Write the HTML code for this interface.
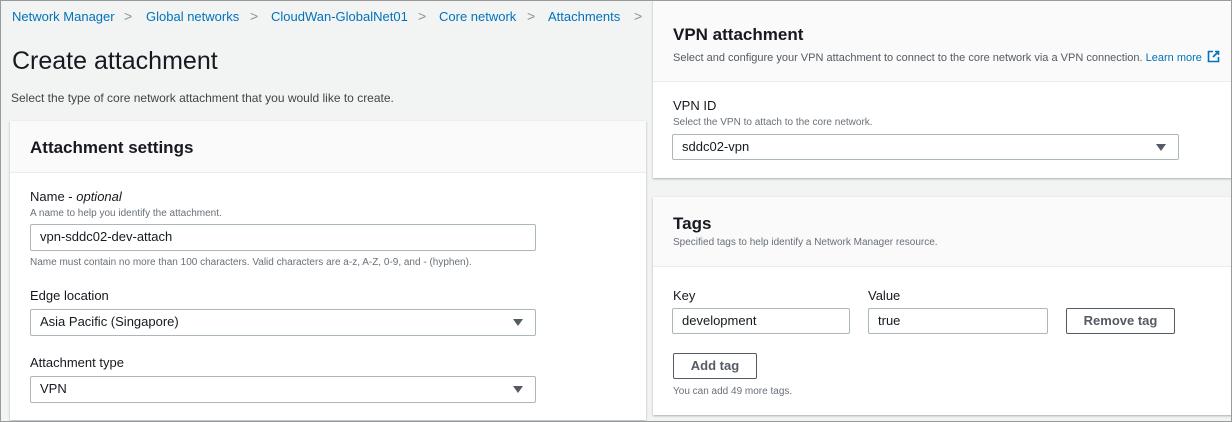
<!DOCTYPE html>
<html><head><meta charset="utf-8"><style>
*{box-sizing:border-box;margin:0;padding:0}
html,body{width:1232px;height:422px;overflow:hidden}
body{background:#f2f3f3;font-family:"Liberation Sans",sans-serif;color:#16191f;position:relative}
.frame{position:absolute;left:0;top:0;width:1232px;height:422px;border:1px solid #9a9a9a;pointer-events:none;z-index:10}
.abs{position:absolute;white-space:nowrap}
.bc{top:9px;font-size:13px;color:#0073bb}
.sep{color:#879596;top:8px;font-size:14px}
.card{position:absolute;background:#fff;box-shadow:0 1px 2px rgba(0,28,36,.3);}
.hdr{position:absolute;left:0;right:0;top:0;background:#fafafa;border-bottom:1px solid #eaeded}
.h2{font-size:17px;font-weight:bold}
.lbl{font-size:13px}
.hint{font-size:10px;color:#687078}
.inp{position:absolute;border:1px solid #aab7b8;border-radius:2px;background:#fff;font-size:13px;padding-left:9px;line-height:24px}
.tri{position:absolute;right:12px;top:9px;width:0;height:0;border-left:5px solid transparent;border-right:5px solid transparent;border-top:7px solid #545b64}
.btn{position:absolute;border:1px solid #545b64;border-radius:2px;background:#fff;font-size:13px;font-weight:bold;color:#545b64;text-align:center;line-height:24px}
</style></head><body>
<div class="abs bc" style="left:12px">Network Manager</div>
<div class="abs sep" style="left:124px">&gt;</div>
<div class="abs bc" style="left:146px">Global networks</div>
<div class="abs sep" style="left:250px">&gt;</div>
<div class="abs bc" style="left:271px">CloudWan-GlobalNet01</div>
<div class="abs sep" style="left:418px">&gt;</div>
<div class="abs bc" style="left:439px">Core network</div>
<div class="abs sep" style="left:527px">&gt;</div>
<div class="abs bc" style="left:548px">Attachments</div>
<div class="abs sep" style="left:634px">&gt;</div>
<div class="abs" style="left:12px;top:47px;font-size:25px">Create attachment</div>
<div class="abs" style="left:11px;top:91px;font-size:12px;color:#444">Select the type of core network attachment that you would like to create.</div>

<div class="card" style="left:10px;top:121px;width:636px;height:299px">
 <div class="hdr" style="height:52px"></div>
 <div class="abs h2" style="left:20px;top:17px">Attachment settings</div>
 <div class="abs lbl" style="left:20px;top:68px">Name - <i>optional</i></div>
 <div class="abs hint" style="left:20px;top:87px">A name to help you identify the attachment.</div>
 <div class="inp" style="left:20px;top:103px;width:506px;height:27px">vpn-sddc02-dev-attach</div>
 <div class="abs hint" style="left:20px;top:136px">Name must contain no more than 100 characters. Valid characters are a-z, A-Z, 0-9, and - (hyphen).</div>
 <div class="abs lbl" style="left:20px;top:167px">Edge location</div>
 <div class="inp" style="left:20px;top:188px;width:506px;height:27px">Asia Pacific (Singapore)<div class="tri"></div></div>
 <div class="abs lbl" style="left:20px;top:234px">Attachment type</div>
 <div class="inp" style="left:20px;top:255px;width:506px;height:27px">VPN<div class="tri"></div></div>
</div>

<div class="card" style="left:653px;top:0;width:590px;height:178px">
 <div class="hdr" style="height:82px"></div>
 <div class="abs h2" style="left:20px;top:25px">VPN attachment</div>
 <div class="abs" style="left:20px;top:50px;font-size:11px;color:#545b64">Select and configure your VPN attachment to connect to the core network via a VPN connection. <span style="color:#0073bb">Learn more</span>
 <svg width="13" height="13" viewBox="0 0 13 13" style="vertical-align:-2px;margin-left:2px"><path d="M6 1.5H1.5v10h10V7M8 1.5h3.5V5M11.5 1.5L6 7" fill="none" stroke="#0073bb" stroke-width="1.6"/></svg></div>
 <div class="abs lbl" style="left:20px;top:98px">VPN ID</div>
 <div class="abs hint" style="left:20px;top:117px">Select the VPN to attach to the core network.</div>
 <div class="inp" style="left:19px;top:134px;width:507px;height:26px">sddc02-vpn<div class="tri"></div></div>
</div>

<div class="card" style="left:653px;top:197px;width:590px;height:218px">
 <div class="hdr" style="height:70px"></div>
 <div class="abs h2" style="left:20px;top:17px">Tags</div>
 <div class="abs hint" style="left:20px;top:40px">Specified tags to help identify a Network Manager resource.</div>
 <div class="abs lbl" style="left:20px;top:91px">Key</div>
 <div class="abs lbl" style="left:215px;top:91px">Value</div>
 <div class="inp" style="left:19px;top:111px;width:178px;height:26px">development</div>
 <div class="inp" style="left:215px;top:111px;width:180px;height:26px">true</div>
 <div class="btn" style="left:413px;top:111px;width:109px;height:26px">Remove tag</div>
 <div class="btn" style="left:20px;top:156px;width:84px;height:26px">Add tag</div>
 <div class="abs hint" style="left:20px;top:189px">You can add 49 more tags.</div>
</div>
<div class="frame"></div>
</body></html>
